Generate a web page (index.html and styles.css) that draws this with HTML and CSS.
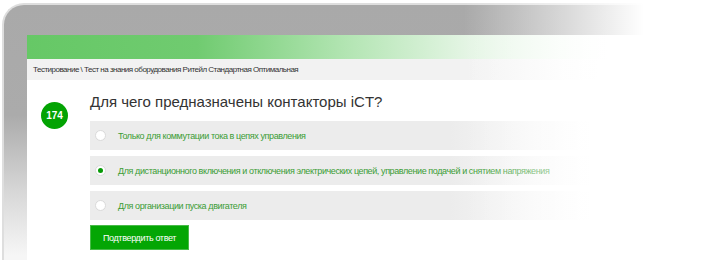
FILE: index.html
```html
<!DOCTYPE html>
<html lang="ru">
  <head>
    <meta charset="UTF-8" />
    <meta name="viewport" content="width=device-width, initial-scale=1.0" />
    <title>Тестирование</title>
    <link rel="stylesheet" href="styles.css">
  </head>

  <body>
    <div class="device">
      <div class="screen">
        <div class="topbar"></div>
        <div class="crumbs">Тестирование \ Тест на знания оборудования Ритейл Стандартная Оптимальная</div>
        <div class="quiz">
          <div class="num">174</div>
          <div class="body">
            <h1 class="question">Для чего предназначены контакторы iCT?</h1>
            <label class="answer">
              <span class="radio"></span>
              <span>Только для коммутации тока в цепях управления</span>
            </label>
            <label class="answer">
              <span class="radio checked"></span>
              <span>Для дистанционного включения и отключения электрических цепей, управление подачей и снятием напряжения</span>
            </label>
            <label class="answer">
              <span class="radio"></span>
              <span>Для организации пуска двигателя</span>
            </label>
            <button class="submit">Подтвердить ответ</button>
          </div>
        </div>
      </div>
      <div class="fade"></div>
    </div>
  </body>
</html>
```

FILE: styles.css
```css
html,
body {
  margin: 0;
  background: #fff;
  overflow: hidden;
}

body {
  font-family: "Liberation Sans", Arial, sans-serif;
}

.device {
  position: relative;
  box-sizing: border-box;
  height: 257px;
  margin: 3px 0 0 2px;
  padding: 30px 0 0 23px;
  border-top: 2px solid #dedede;
  border-left: 2px solid #dedede;
  border-radius: 22px 0 0 0;
  background: linear-gradient(to bottom, #a9a9a9 0, #ababab 110px, #d6d6d6 185px, #f6f6f6 250px);
}

.screen {
  background: #fff;
  height: 100%;
}

.topbar {
  height: 24px;
  background: linear-gradient(to right, #66c866 0, #70cb70 170px, #b3e5b3 320px, #e4f5e4 440px, #fff 580px);
}

.crumbs {
  height: 21px;
  line-height: 21px;
  padding-left: 6px;
  font-size: 8px;
  letter-spacing: -0.5px;
  color: #333;
  background: linear-gradient(to right, #f2f2f2 0, #f2f2f2 440px, rgba(242, 242, 242, 0) 570px);
}

.quiz {
  display: grid;
  grid-template-columns: 63px 1fr;
  padding-top: 13px;
}

.num {
  width: 27px;
  height: 27px;
  margin: 9px 0 0 14px;
  border-radius: 50%;
  background: #03a303;
  color: #fff;
  font-weight: bold;
  font-size: 10px;
  line-height: 27px;
  text-align: center;
}

.question {
  margin: 0 0 10px;
  font-weight: normal;
  font-size: 15px;
  line-height: 18px;
  color: #333;
}

.answer {
  display: flex;
  align-items: center;
  height: 29px;
  margin-bottom: 6px;
  padding-left: 5px;
  background: linear-gradient(to right, #ececec 0, #ececec 360px, rgba(236, 236, 236, 0) 500px);
  color: #3b9c34;
  font-size: 9px;
  letter-spacing: -0.4px;
}

.radio {
  box-sizing: border-box;
  width: 11px;
  height: 11px;
  margin-right: 12px;
  border: 1px solid #dadada;
  border-radius: 50%;
  background: #fff;
  position: relative;
}

.radio.checked::after {
  content: "";
  position: absolute;
  left: 2px;
  top: 2px;
  width: 5px;
  height: 5px;
  border-radius: 50%;
  background: #079a07;
}

.submit {
  display: block;
  width: 99px;
  height: 25px;
  margin-top: -1px;
  padding: 0;
  border: 1px solid #48bb48;
  background: #04a604;
  color: #fff;
  font-family: inherit;
  font-size: 9px;
  letter-spacing: -0.35px;
}

.fade {
  position: absolute;
  top: -2px;
  right: 0;
  bottom: 0;
  left: 0;
  background: linear-gradient(to right, rgba(255, 255, 255, 0) 460px, rgba(255, 255, 255, 0.55) 560px, #fff 640px);
}
```
